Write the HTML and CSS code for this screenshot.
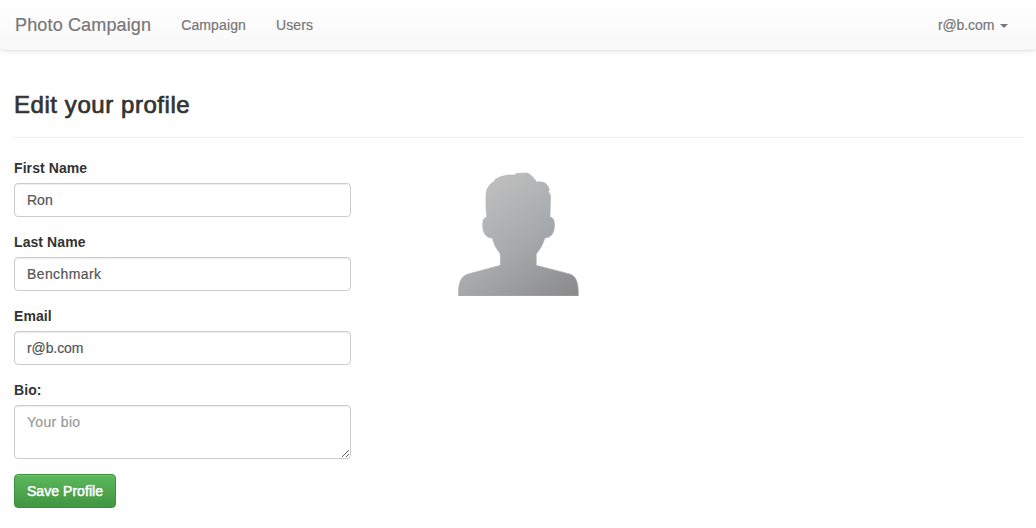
FILE: index.html
```html
<!DOCTYPE html>
<html lang="en">
<head>
<meta charset="utf-8">
<title>Edit your profile</title>
<link rel="stylesheet" href="styles.css">
</head>
<body>
<nav class="navbar">
  <a class="brand">Photo Campaign</a>
  <a class="nav-link">Campaign</a>
  <a class="nav-link">Users</a>
  <a class="nav-link account">r@b.com <span class="caret"></span></a>
</nav>
<main class="container">
  <h3 class="title">Edit your profile</h3>
  <div class="row">
    <form class="form">
      <div class="group"><label class="label" for="first">First Name</label><input class="control" id="first" value="Ron"></div>
      <div class="group"><label class="label" for="last">Last Name</label><input class="control control-name" id="last" value="Benchmark"></div>
      <div class="group"><label class="label" for="email">Email</label><input class="control control-email" id="email" value="r@b.com"></div>
      <div class="group"><label class="label" for="bio">Bio:</label><textarea class="control bio" id="bio" placeholder="Your bio"></textarea></div>
      <button class="save" type="button">Save Profile</button>
    </form>
    <svg class="avatar" width="122" height="124" viewBox="0 0 122 124">
      <defs><linearGradient id="shade" gradientUnits="userSpaceOnUse" x1="22" y1="12" x2="108" y2="128"><stop offset="0" stop-color="#c0c0c0"/><stop offset=".5" stop-color="#a7a9ab"/><stop offset="1" stop-color="#8b8b8c"/></linearGradient></defs>
      <path fill="url(#shade)" stroke="#b4b4b4" stroke-width=".6" d="M.3 124C.3 112 2 104.500 10 102L42.300 93.300V82Q36.500 75 34.300 66.300L32 65.700C27 65 24.700 59 24.700 54C24.500 49 25.500 45.500 28.900 45C27.800 38 27.600 26 28.500 18.700C30 14 34 10 38.500 8.300L36.300 8Q42 4 50 3L57.500 3L58 1.600L68.700.9C73 2 76.500 7 78.700 10C83 9.500 87 10 88.500 12.500Q91.500 15 91.200 18.700L90 19L92.600 23.300L92 45C95.500 45.300 96.700 49 96.500 54C96.300 61 93 66 87 66Q84 75.500 78.300 82V93.300L112 102C118.500 104.500 120.500 110 120.500 124Z"/>
    </svg>
  </div>
</main>
</body>
</html>
```
FILE: styles.css
```css
* { box-sizing: border-box; }
body { margin: 0; background: #fff; color: #333; font: 14px/20px "Liberation Sans", Arial, sans-serif; }
.navbar { display: flex; height: 51px; padding: 0 13px 0 15px; align-items: center; color: #777; background: linear-gradient(#fff, #f8f8f8); border-bottom: 1px solid #e7e7e7; border-radius: 4px; box-shadow: 0 1px 5px rgba(0,0,0,.075); -webkit-text-stroke: .2px; text-shadow: 0 1px 0 rgba(255,255,255,.25); }
.brand { font-size: 18px; letter-spacing: .15px; margin-right: 15px; white-space: nowrap; }
.nav-link { padding: 0 15px; letter-spacing: .12px; }
.account { margin-left: auto; letter-spacing: -.1px; }
.caret { display: inline-block; margin-left: 2px; vertical-align: middle; border-top: 4px solid #777; border-left: 4px solid transparent; border-right: 4px solid transparent; }
.container { padding: 41px 12px 0 14px; }
.title { margin: 0 0 20px; padding-bottom: 19px; border-bottom: 1px solid #eee; font-size: 24px; line-height: 26px; font-weight: 500; letter-spacing: .56px; -webkit-text-stroke: .7px; }
.row { display: flex; align-items: flex-start; }
.form { width: 337px; }
.group { margin-bottom: 15px; }
.label { display: block; font-weight: bold; margin-bottom: 5px; letter-spacing: .08px; }
.control { display: block; width: 100%; height: 34px; padding: 6px 12px; font: inherit; color: #555; border: 1px solid #ccc; border-radius: 4px; background: #fff; box-shadow: inset 0 1px 1px rgba(0,0,0,.075); -webkit-text-stroke: .2px; }
.control-name { letter-spacing: .4px; }
.control-email { letter-spacing: -.1px; }
.bio { height: 54px; resize: vertical; letter-spacing: .32px; }
.bio::placeholder { color: #999; }
.save { display: block; width: 102px; height: 34px; padding: 6px 0; font: inherit; letter-spacing: .05px; text-align: center; color: #fff; border: 1px solid #3e8f3e; border-radius: 4px; background: linear-gradient(#5cb85c, #419641); box-shadow: inset 0 1px 0 rgba(255,255,255,.15), 0 1px 1px rgba(0,0,0,.075); text-shadow: 0 -1px 0 rgba(0,0,0,.2); -webkit-text-stroke: .5px; }
.avatar { margin: 14px 0 0 107px; }
```
